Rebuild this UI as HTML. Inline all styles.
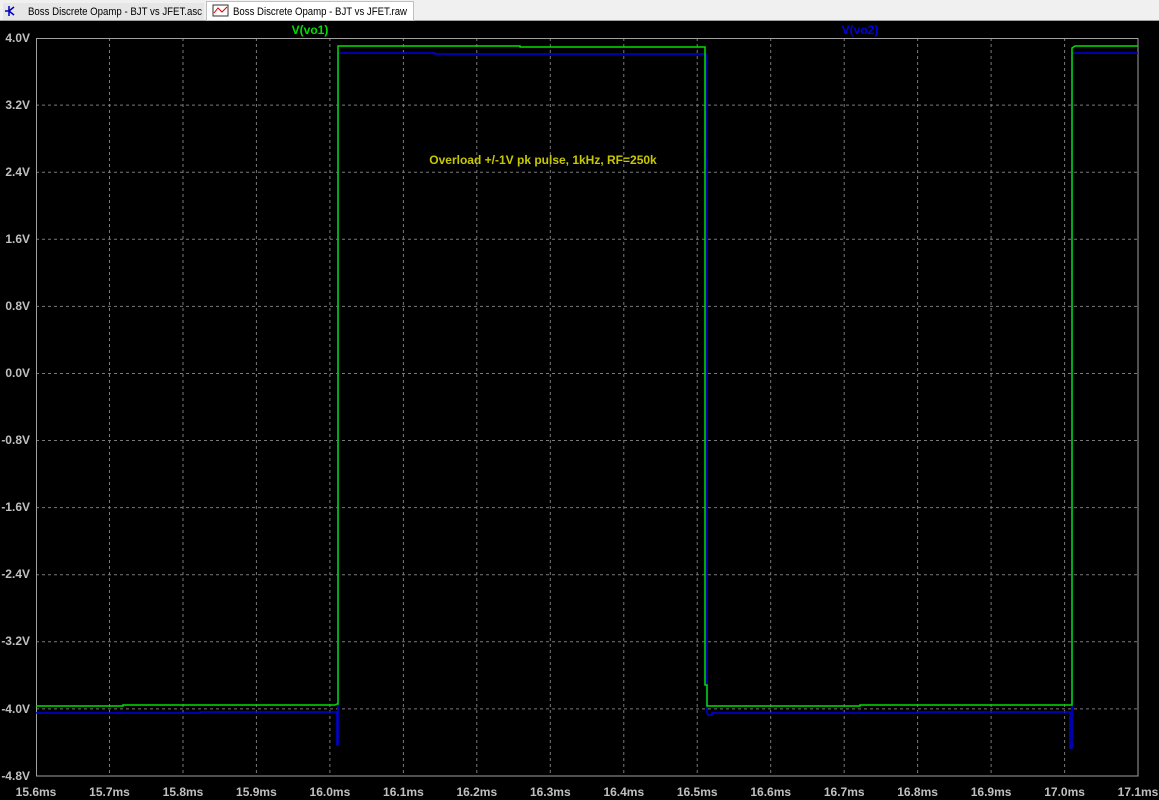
<!DOCTYPE html><html><head><style>
html,body{margin:0;padding:0;width:1159px;height:800px;overflow:hidden;background:#000}
</style></head><body>
<svg width="1159" height="800" xmlns="http://www.w3.org/2000/svg" font-family="Liberation Sans, sans-serif">
<rect x="0" y="0" width="1159" height="800" fill="#000"/>
<rect x="0" y="0" width="1159" height="21" fill="#f0f0f0"/>
<line x1="0" y1="20.5" x2="1159" y2="20.5" stroke="#a0a0a0"/>
<rect x="3" y="3" width="201" height="17" fill="#e6e6e6"/>
<path d="M9 6 L9 16 M9 11 L14 7 M9 11 L14 15 M5 11 L9 11" stroke="#0000c0" stroke-width="1.5" fill="none"/>
<text x="28" y="15" font-size="11" fill="#000" textLength="174" lengthAdjust="spacingAndGlyphs">Boss Discrete Opamp - BJT vs JFET.asc</text>
<rect x="206.5" y="1.5" width="207" height="19" fill="#fff" stroke="#c0c0c0"/>
<rect x="213" y="5" width="15" height="11" fill="#fff" stroke="#333"/>
<path d="M214 13 L218 8 L222 12 L227 7" stroke="#d00" fill="none"/>
<text x="233" y="15" font-size="11" fill="#000" textLength="174" lengthAdjust="spacingAndGlyphs">Boss Discrete Opamp - BJT vs JFET.raw</text>
<g stroke="#7a7a7a" stroke-dasharray="3,3" stroke-width="1">
<line x1="109.5" y1="38" x2="109.5" y2="776"/><line x1="183" y1="38" x2="183" y2="776"/><line x1="256.4" y1="38" x2="256.4" y2="776"/><line x1="329.9" y1="38" x2="329.9" y2="776"/><line x1="403.4" y1="38" x2="403.4" y2="776"/><line x1="476.8" y1="38" x2="476.8" y2="776"/><line x1="550.3" y1="38" x2="550.3" y2="776"/><line x1="623.8" y1="38" x2="623.8" y2="776"/><line x1="697.2" y1="38" x2="697.2" y2="776"/><line x1="770.7" y1="38" x2="770.7" y2="776"/><line x1="844.2" y1="38" x2="844.2" y2="776"/><line x1="917.6" y1="38" x2="917.6" y2="776"/><line x1="991.1" y1="38" x2="991.1" y2="776"/><line x1="1064.6" y1="38" x2="1064.6" y2="776"/>
<line x1="36" y1="105.1" x2="1138" y2="105.1"/><line x1="36" y1="172.2" x2="1138" y2="172.2"/><line x1="36" y1="239.3" x2="1138" y2="239.3"/><line x1="36" y1="306.4" x2="1138" y2="306.4"/><line x1="36" y1="373.5" x2="1138" y2="373.5"/><line x1="36" y1="440.5" x2="1138" y2="440.5"/><line x1="36" y1="507.6" x2="1138" y2="507.6"/><line x1="36" y1="574.7" x2="1138" y2="574.7"/><line x1="36" y1="641.8" x2="1138" y2="641.8"/><line x1="36" y1="708.9" x2="1138" y2="708.9"/>
</g>
<rect x="36.5" y="38.5" width="1101.5" height="737.5" fill="none" stroke="#a0a0a0"/>
<g fill="#c0c0c0" font-size="12" font-weight="bold">
<g text-anchor="end">
<text x="30" y="42">4.0V</text><text x="30" y="109">3.2V</text><text x="30" y="176">2.4V</text><text x="30" y="243">1.6V</text><text x="30" y="310">0.8V</text><text x="30" y="377">0.0V</text><text x="30" y="444">-0.8V</text><text x="30" y="511">-1.6V</text><text x="30" y="578">-2.4V</text><text x="30" y="645">-3.2V</text><text x="30" y="713">-4.0V</text><text x="30" y="780">-4.8V</text>
</g>
<g text-anchor="middle">
<text x="36" y="796">15.6ms</text><text x="109.5" y="796">15.7ms</text><text x="183" y="796">15.8ms</text><text x="256.4" y="796">15.9ms</text><text x="329.9" y="796">16.0ms</text><text x="403.4" y="796">16.1ms</text><text x="476.8" y="796">16.2ms</text><text x="550.3" y="796">16.3ms</text><text x="623.8" y="796">16.4ms</text><text x="697.2" y="796">16.5ms</text><text x="770.7" y="796">16.6ms</text><text x="844.2" y="796">16.7ms</text><text x="917.6" y="796">16.8ms</text><text x="991.1" y="796">16.9ms</text><text x="1064.6" y="796">17.0ms</text><text x="1138" y="796">17.1ms</text>
</g>
</g>
<text x="310" y="34" font-size="12" font-weight="bold" fill="#00e000" text-anchor="middle">V(vo1)</text>
<text x="860" y="34" font-size="12" font-weight="bold" fill="#0000e0" text-anchor="middle">V(vo2)</text>
<path d="M36 713 L200 713 L200 712 L337 712 L337 745 L338 745 L338 54 L340 53 L435 53 L435 54 L706 54 L706 160 L707 160 L707 713 L708 715 L712 715 L712 713 L917 713 L917 712 L1070 712 L1070 748 L1072 748 L1072 54 L1074 53 L1138 53" fill="none" stroke="#0000e0" stroke-width="1.5"/>
<path d="M36 706 L123 706 L123 705 L335 705 L337 704 L338 704 L338 46 L520 46 L520 47 L705 47 L705 685 L707 685 L707 706 L860 706 L860 705 L1070 705 L1072 705 L1072 48 L1075 46 L1138 46" fill="none" stroke="#00e000" stroke-width="1.5"/>
<text x="543" y="164" font-size="12" font-weight="bold" fill="#c8c800" text-anchor="middle">Overload +/-1V pk pulse, 1kHz, RF=250k</text>
</svg>
</body></html>
